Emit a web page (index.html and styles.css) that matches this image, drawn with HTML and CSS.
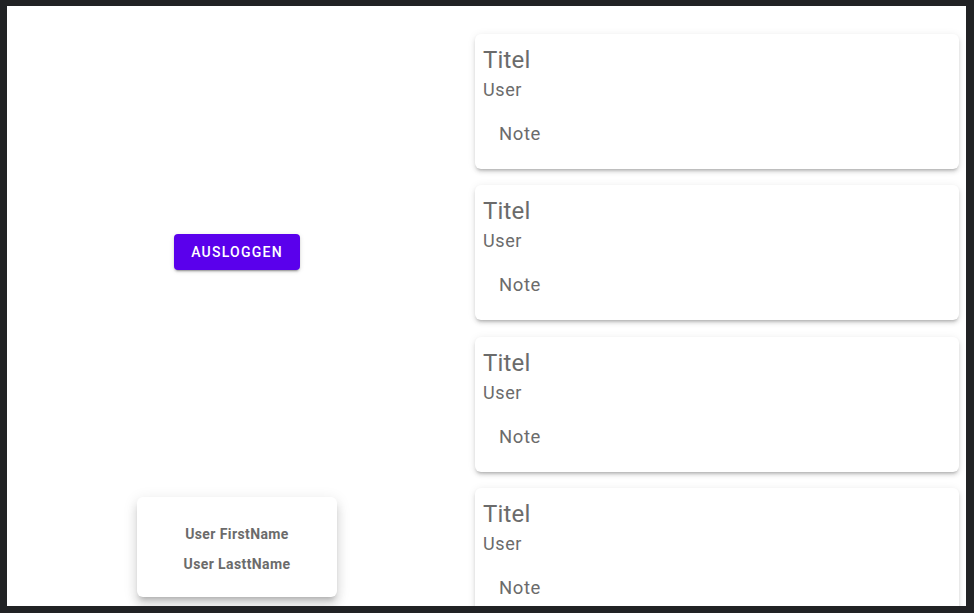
FILE: index.html
```html
<!DOCTYPE html>
<html lang="de">
<head>
<meta charset="utf-8">
<title>Notes</title>
<link rel="stylesheet" href="styles.css">
</head>
<body>
<div class="frame">
  <div class="side">
    <button class="btn" type="button">Ausloggen</button>
    <div class="user-card">
      <div class="user-line">User FirstName</div>
      <div class="user-line">User LasttName</div>
    </div>
  </div>
  <div class="list">
    <div class="note-card">
      <div class="title">Titel</div>
      <div class="user">User</div>
      <div class="note">Note</div>
    </div>
    <div class="note-card">
      <div class="title">Titel</div>
      <div class="user">User</div>
      <div class="note">Note</div>
    </div>
    <div class="note-card">
      <div class="title">Titel</div>
      <div class="user">User</div>
      <div class="note">Note</div>
    </div>
    <div class="note-card">
      <div class="title">Titel</div>
      <div class="user">User</div>
      <div class="note">Note</div>
    </div>
  </div>
</div>
</body>
</html>
```

FILE: styles.css
```css
html, body {
  margin: 0;
  padding: 0;
}
body {
  background: #212224;
  padding: 6px 8px 7px 7px;
  font-family: Roboto, "Liberation Sans", Arial, sans-serif;
  color: #6b6b6b;
}
.frame {
  background: #ffffff;
  width: 959px;
  height: 600px;
  overflow: hidden;
  display: flex;
}
.side {
  width: 460px;
  flex: none;
  display: flex;
  flex-direction: column;
  align-items: center;
}
.btn {
  margin-top: 228px;
  height: 36px;
  padding: 0 16px;
  min-width: 126px;
  border: none;
  border-radius: 4px;
  background: #5a00ec;
  color: #ffffff;
  font-family: Roboto, "Liberation Sans", Arial, sans-serif;
  font-size: 14px;
  font-weight: 500;
  letter-spacing: 1.25px;
  text-transform: uppercase;
  box-shadow: 0 3px 1px -2px rgba(0,0,0,.2), 0 2px 2px 0 rgba(0,0,0,.14), 0 1px 5px 0 rgba(0,0,0,.12);
}
.user-card {
  margin-top: 227px;
  width: 200px;
  height: 100px;
  box-sizing: border-box;
  padding-top: 22px;
  border-radius: 6px;
  background: #ffffff;
  box-shadow: 0 5px 5px -3px rgba(0,0,0,.2), 0 8px 10px 1px rgba(0,0,0,.10), 0 3px 14px 2px rgba(0,0,0,.08);
  display: flex;
  flex-direction: column;
  align-items: center;
}
.user-line {
  font-size: 14px;
  font-weight: 700;
  line-height: 30px;
  letter-spacing: 0.4px;
  color: #6b6b6b;
}
.list {
  flex: 1;
  padding: 28px 7px 0 8px;
  display: flex;
  flex-direction: column;
  gap: 16.3px;
}
.note-card {
  flex: none;
  height: 135px;
  box-sizing: border-box;
  padding: 9px 8px 0 8px;
  border-radius: 6px;
  background: #ffffff;
  box-shadow: 0 3px 3px -2px rgba(0,0,0,.2), 0 3px 4px 0 rgba(0,0,0,.12), 0 1px 8px 0 rgba(0,0,0,.08);
}
.title {
  font-size: 24px;
  line-height: 34px;
  letter-spacing: 0.2px;
  color: #6b6b6b;
}
.user {
  font-size: 18px;
  line-height: 25px;
  letter-spacing: 0.6px;
  color: #6b6b6b;
}
.note {
  margin-top: 20px;
  padding-left: 16px;
  font-size: 18.5px;
  line-height: 24px;
  letter-spacing: 0.6px;
  color: #6b6b6b;
}
```
